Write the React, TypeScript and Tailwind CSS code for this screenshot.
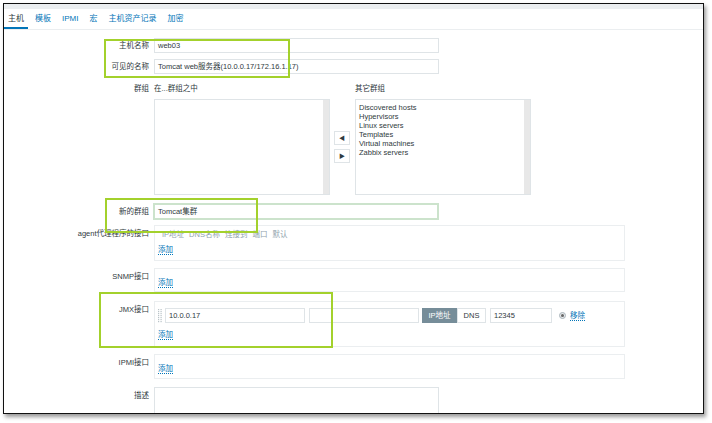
import React from "react"

const font = { fontFamily: '"Liberation Sans", "Noto Sans CJK SC", sans-serif' }

function Label({ children }: { children: React.ReactNode }) {
  return <div className="w-[145px] shrink-0 text-right leading-[10px] text-[#2f3a40] whitespace-nowrap">{children}</div>
}

function AddLink() {
  return (
    <span className="text-[#0275b8] border-b border-dotted border-[#0275b8] leading-[9px]">添加</span>
  )
}

function ListBox({ items }: { items: string[] }) {
  return (
    <div className="flex h-[96px] border border-[#dfe4e7] bg-white">
      <div className="flex-1 pl-[3px] pt-[3px] leading-[9px] text-[#2f3a40]">
        {items.map((it) => (
          <div key={it}>{it}</div>
        ))}
      </div>
      <div className="w-[6px] bg-[#e8e8e8]" />
    </div>
  )
}

function DragHandle() {
  const dots = []
  for (let r = 0; r < 7; r++) {
    for (let c = 0; c < 2; c++) {
      dots.push(<rect key={`${r}-${c}`} x={c * 2.5} y={r * 2} width="1.2" height="1.2" fill="#b9c3c8" />)
    }
  }
  return (
    <svg width="5" height="14" viewBox="0 0 5 14">
      {dots}
    </svg>
  )
}

export default function App() {
  const tabs = ["主机", "模板", "IPMI", "宏", "主机资产记录", "加密"]

  return (
    <div className="relative w-[712px] h-[423px] bg-white text-[7.5px]" style={font}>
      <div className="ml-[3px] mt-[3px] w-[701px] h-[411px] border border-[#111] overflow-hidden shadow-[2px_3px_4px_rgba(0,0,0,0.4)] bg-white">
        {/* top strip */}
        <div className="h-[5px] bg-[#ebeef0]" />

        {/* tabs */}
        <div className="flex h-[21px] items-stretch border-b border-[#ebeef0] gap-[3px] text-[8px]">
          {tabs.map((t, i) => (
            <div
              key={t}
              className={`flex items-center px-[4px] ${
                i === 0 ? "text-[#2f3a40] border-b-2 border-[#0275b8] pt-[2px]" : "text-[#0275b8]"
              }`}
            >
              {t}
            </div>
          ))}
        </div>

        {/* form */}
        <div className="flex flex-col">
          <div className="flex items-center mt-[8px]">
            <Label>主机名称</Label>
            <div className="ml-[5px] w-[285px] h-[15px] border border-[#dfe4e7] px-[3px] flex items-center text-[#2f3a40]">
              web03
            </div>
          </div>

          <div className="flex items-center mt-[6px]">
            <Label>可见的名称</Label>
            <div className="ml-[5px] w-[285px] h-[15px] border border-[#dfe4e7] px-[3px] flex items-center text-[#2f3a40]">
              Tomcat web服务器(10.0.0.17/172.16.1.17)
            </div>
          </div>

          <div className="flex mt-[10px]">
            <Label>群组</Label>
            <div className="ml-[5px] flex flex-col">
              <div className="flex leading-[10px] text-[#2f3a40]">
                <div className="w-[201px]">在...群组之中</div>
                <div>其它群组</div>
              </div>
              <div className="flex items-center mt-[5px]">
                <div className="w-[176px]">
                  <ListBox items={[]} />
                </div>
                <div className="ml-[4px] w-[16px] flex flex-col gap-[4px]">
                  <div className="h-[14px] border border-[#dfe4e7] bg-white flex items-center justify-center text-[6px] text-[#2f3a40]">
                    ◀
                  </div>
                  <div className="h-[14px] border border-[#dfe4e7] bg-white flex items-center justify-center text-[6px] text-[#2f3a40]">
                    ▶
                  </div>
                </div>
                <div className="ml-[5px] w-[176px]">
                  <ListBox
                    items={[
                      "Discovered hosts",
                      "Hypervisors",
                      "Linux servers",
                      "Templates",
                      "Virtual machines",
                      "Zabbix servers",
                    ]}
                  />
                </div>
              </div>
            </div>
          </div>

          <div className="flex items-center mt-[8px]">
            <Label>新的群组</Label>
            <div className="ml-[4px] w-[286px] h-[17px] border-2 border-[#cce3cc] px-[3px] flex items-center text-[#2f3a40]">
              Tomcat集群
            </div>
          </div>

          <div className="flex mt-[5px]">
            <div className="w-[145px] shrink-0 text-right pt-[4px] leading-[10px] text-[#2f3a40] whitespace-nowrap">
              agent代理程序的接口
            </div>
            <div className="ml-[5px] w-[471px] h-[36px] border border-[#ebeef0] px-[3px] pt-[4px] flex flex-col">
              <div className="flex gap-[5px] pl-[4px] leading-[10px] text-[#8fa3ad]">
                <span>IP地址</span>
                <span>DNS名称</span>
                <span>连接到</span>
                <span>端口</span>
                <span>默认</span>
              </div>
              <div className="mt-[4px]">
                <AddLink />
              </div>
            </div>
          </div>

          <div className="flex mt-[7px]">
            <div className="w-[145px] shrink-0 text-right pt-[4px] leading-[10px] text-[#2f3a40]">SNMP接口</div>
            <div className="ml-[5px] w-[471px] h-[24px] border border-[#ebeef0] px-[3px] pt-[8px]">
              <AddLink />
            </div>
          </div>

          <div className="flex mt-[9px]">
            <div className="w-[145px] shrink-0 text-right pt-[4px] leading-[10px] text-[#2f3a40]">JMX接口</div>
            <div className="ml-[5px] w-[471px] h-[46px] border border-[#ebeef0] px-[3px] pt-[6px] flex flex-col">
              <div className="flex items-center h-[15px]">
                <DragHandle />
                <div className="ml-[2px] w-[140px] h-[15px] border border-[#dfe4e7] px-[3px] flex items-center text-[#2f3a40]">
                  10.0.0.17
                </div>
                <div className="ml-[4px] w-[110px] h-[15px] border border-[#dfe4e7]" />
                <div className="ml-[3px] flex h-[15px]">
                  <div className="w-[35px] bg-[#768d99] text-white flex items-center justify-center">IP地址</div>
                  <div className="w-[29px] border border-[#dfe4e7] text-[#2f3a40] flex items-center justify-center">
                    DNS
                  </div>
                </div>
                <div className="ml-[4px] w-[62px] h-[15px] border border-[#dfe4e7] px-[3px] flex items-center text-[#2f3a40]">
                  12345
                </div>
                <div className="ml-[7px] w-[7px] h-[7px] rounded-full border border-[#aab5bb] bg-[#e6e9eb] flex items-center justify-center">
                  <div className="w-[3px] h-[3px] rounded-full bg-[#666]" />
                </div>
                <span className="ml-[4px] text-[#0275b8] border-b border-dotted border-[#0275b8] leading-[9px]">移除</span>
              </div>
              <div className="mt-[6px]">
                <AddLink />
              </div>
            </div>
          </div>

          <div className="flex mt-[7px]">
            <div className="w-[145px] shrink-0 text-right pt-[4px] leading-[10px] text-[#2f3a40]">IPMI接口</div>
            <div className="ml-[5px] w-[471px] h-[25px] border border-[#ebeef0] px-[3px] pt-[8px]">
              <AddLink />
            </div>
          </div>

          <div className="flex mt-[8px]">
            <div className="w-[145px] shrink-0 text-right pt-[4px] leading-[10px] text-[#2f3a40]">描述</div>
            <div className="ml-[5px] w-[285px] h-[40px] border border-[#dfe4e7]" />
          </div>
        </div>
      </div>

      {/* highlight boxes drawn over the form */}
      <div className="absolute left-[104px] top-[36px] w-[186px] h-[39px] border-2 border-[#a3d12c]" />
      <div className="absolute left-[105px] top-[195px] w-[153px] h-[35px] border-2 border-[#a3d12c]" />
      <div className="absolute left-[99px] top-[289px] w-[234px] h-[56px] border-2 border-[#a3d12c]" />
    </div>
  )
}
